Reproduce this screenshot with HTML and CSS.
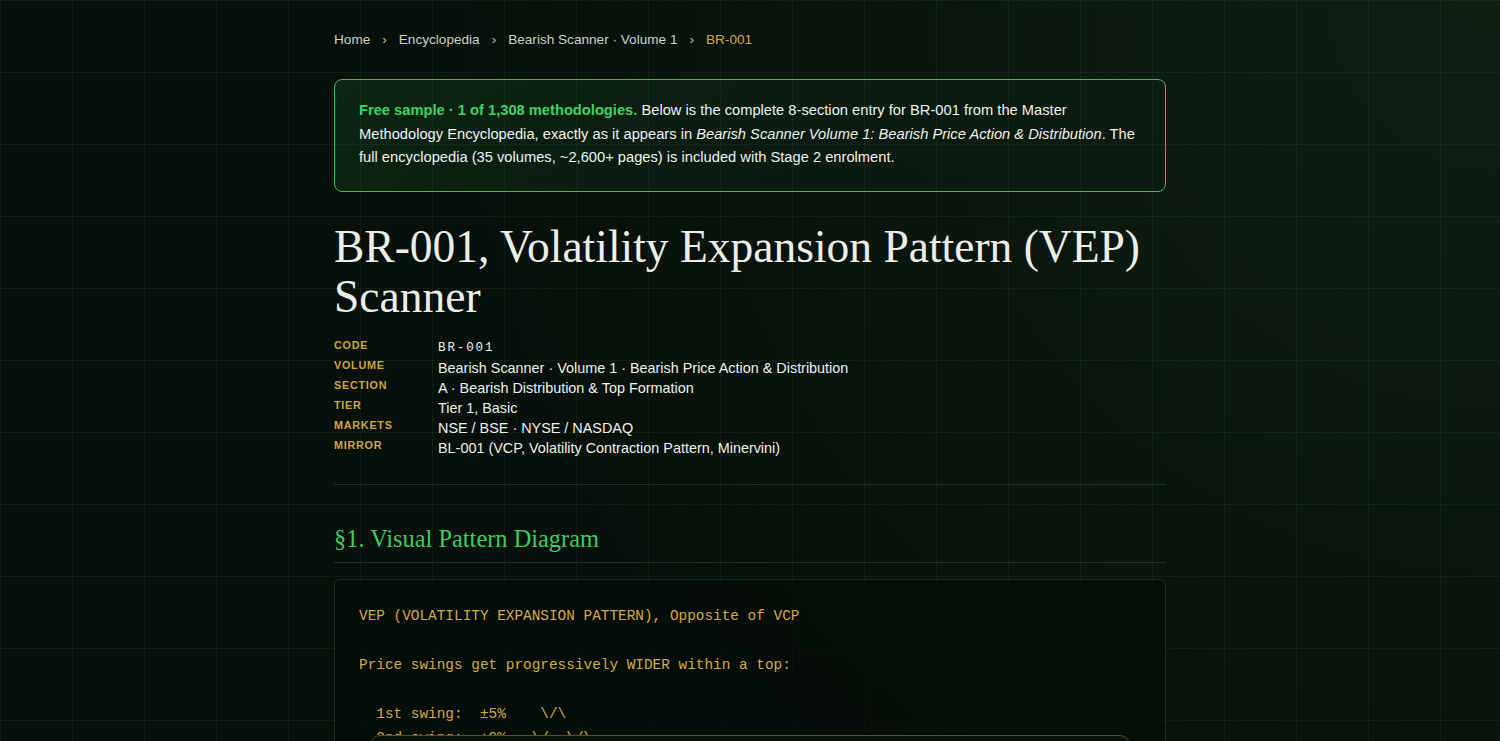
FILE: index.html
```html
<!DOCTYPE html>
<html lang="en">
<head>
    <meta charset="UTF-8">
    <meta name="viewport" content="width=device-width, initial-scale=1.0">
    <title>BR-001, Volatility Expansion Pattern (VEP) Scanner</title>
    <link rel="stylesheet" href="styles.css">
</head>
<body>
    <main class="page">
        <nav class="crumbs">
            <a href="#">Home</a>
            <span class="sep">›</span>
            <a href="#">Encyclopedia</a>
            <span class="sep">›</span>
            <a href="#">Bearish Scanner · Volume 1</a>
            <span class="sep">›</span>
            <span class="current">BR-001</span>
        </nav>

        <div class="notice">
            <strong>Free sample · 1 of 1,308 methodologies.</strong> Below is the complete 8-section entry for BR-001 from the Master Methodology Encyclopedia, exactly as it appears in <em>Bearish Scanner Volume 1: Bearish Price Action &amp; Distribution</em>. The full encyclopedia (35 volumes, ~2,600+ pages) is included with Stage 2 enrolment.
        </div>

        <h1 class="title">BR-001, Volatility Expansion Pattern (VEP) Scanner</h1>

        <dl class="meta">
            <dt>Code</dt><dd class="mono">BR-001</dd>
            <dt>Volume</dt><dd>Bearish Scanner · Volume 1 · Bearish Price Action &amp; Distribution</dd>
            <dt>Section</dt><dd>A · Bearish Distribution &amp; Top Formation</dd>
            <dt>Tier</dt><dd>Tier 1, Basic</dd>
            <dt>Markets</dt><dd>NSE / BSE · NYSE / NASDAQ</dd>
            <dt>Mirror</dt><dd>BL-001 (VCP, Volatility Contraction Pattern, Minervini)</dd>
        </dl>

        <section class="entry">
            <h2>§1. Visual Pattern Diagram</h2>
            <pre class="diagram">VEP (VOLATILITY EXPANSION PATTERN), Opposite of VCP

Price swings get progressively WIDER within a top:

  1st swing:  ±5%    \/\
  2nd swing:  ±9%   \/  \/\
  3rd swing:  ±14% \/      \/\
</pre>
        </section>
    </main>

    <div class="cta">
        <span>Want all 1,308 methodologies? Stage 2 enrolment includes the full 35-volume encyclopedia.</span>
    </div>
</body>
</html>
```

FILE: styles.css
```css
html {
    background: #07100a;
}
body {
    margin: 0;
    min-height: 100vh;
    font-family: "Liberation Sans", Arial, sans-serif;
    color: #e9ede7;
    background-color: #07100a;
    background-image:
        linear-gradient(rgba(90, 160, 105, 0.09) 1px, transparent 1px),
        linear-gradient(90deg, rgba(90, 160, 105, 0.09) 1px, transparent 1px),
        radial-gradient(circle at 100% 0%, #0e1f12 0%, rgba(7, 16, 10, 0) 60%);
    background-size: 72px 72px, 72px 72px, 100% 100%;
}
.page {
    max-width: 832px;
    margin: 0 auto;
    padding: 31px 0 80px;
}
.crumbs {
    display: flex;
    align-items: center;
    gap: 11px;
    font-size: 13.6px;
    line-height: 17px;
    color: #c9d1c8;
    margin-bottom: 31px;
}
.crumbs a {
    color: #c9d1c8;
    text-decoration: none;
}
.crumbs .sep {
    color: #b9c2b8;
    padding: 0 1px;
}
.crumbs .current {
    color: #d7a945;
}
.notice {
    border: 1px solid #3cbd5c;
    border-radius: 8px;
    padding: 19px 24px 21px;
    font-size: 14.7px;
    line-height: 23.5px;
    color: #eef1ec;
    background: linear-gradient(135deg, rgba(40, 150, 70, 0.16) 0%, rgba(20, 70, 35, 0.1) 60%, rgba(12, 40, 20, 0.08) 100%);
}
.notice strong {
    color: #3fd268;
}
.title {
    font-family: "Liberation Serif", "Times New Roman", serif;
    font-weight: 400;
    font-size: 45.5px;
    line-height: 50px;
    color: #eceee8;
    margin: 30px 0 16px;
}
.meta {
    display: grid;
    grid-template-columns: 104px 1fr;
    grid-auto-rows: 20px;
    margin: 0;
    padding-bottom: 26px;
    border-bottom: 1px solid #1c3622;
}
.meta dt {
    font-size: 10.8px;
    font-weight: 700;
    letter-spacing: 0.07em;
    text-transform: uppercase;
    color: #d1a53f;
    line-height: 14px;
}
.meta dd {
    margin: 0;
    font-size: 14.4px;
    line-height: 20px;
    color: #eef0ec;
}
.meta dd.mono {
    font-family: "Liberation Mono", "Courier New", monospace;
    font-size: 12.5px;
    letter-spacing: 0.15em;
}
.entry h2 {
    font-family: "Liberation Serif", "Times New Roman", serif;
    font-weight: 400;
    font-size: 24.4px;
    line-height: 31px;
    color: #3ecb63;
    margin: 38px 0 16px;
    padding-bottom: 8px;
    border-bottom: 1px solid #1c3622;
}
.diagram {
    margin: 0;
    border: 1px solid #1b3120;
    border-radius: 6px;
    background: rgba(5, 12, 7, 0.6);
    padding: 24px 24px 22px;
    font-family: "Liberation Mono", "Courier New", monospace;
    font-size: 14.4px;
    line-height: 24.5px;
    color: #d7aa45;
}
.cta {
    position: fixed;
    left: 370px;
    top: 735px;
    width: 760px;
    height: 60px;
    box-sizing: border-box;
    border: 1px solid #5c4d1c;
    border-radius: 10px;
    background: #09120b;
    padding: 18px 24px;
    font-size: 14px;
    color: #e9ede7;
}
```
